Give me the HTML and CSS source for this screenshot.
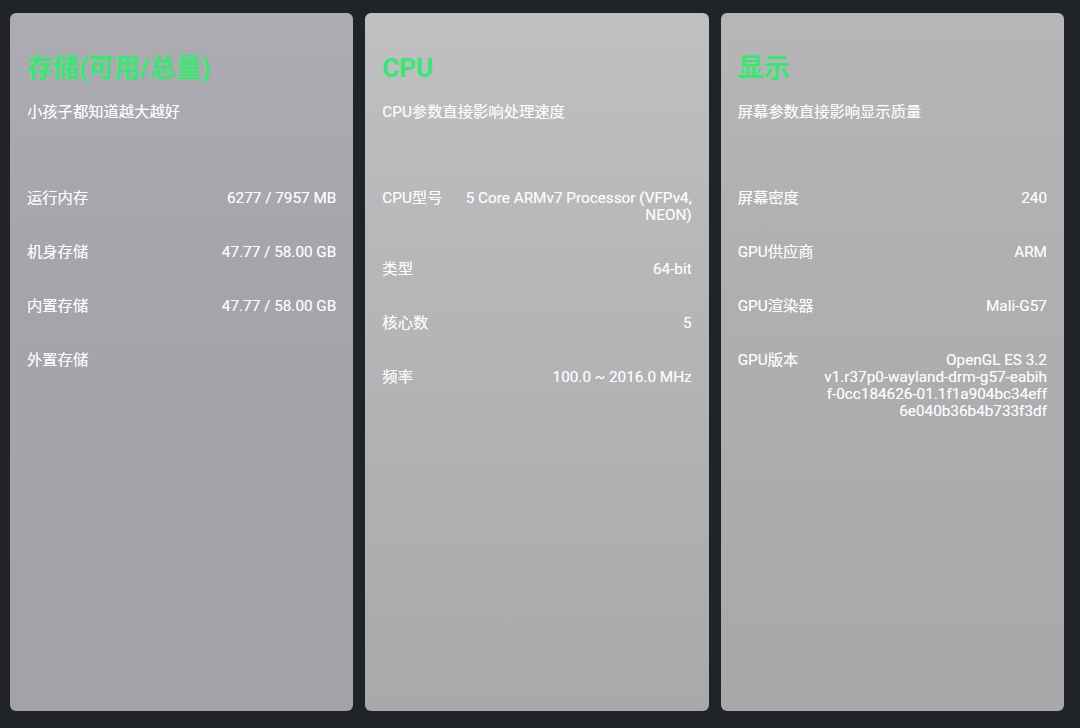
FILE: index.html
```html
<!DOCTYPE html>
<html lang="zh-CN">
<head>
<meta charset="utf-8">
<title>设备信息</title>
<link rel="stylesheet" href="styles.css">
</head>
<body>
<div class="screen">
  <section class="card card-storage">
    <h1 class="title">存储(可用/总量)</h1>
    <p class="subtitle">小孩子都知道越大越好</p>
    <div class="rows">
      <div class="row"><span class="label">运行内存</span><span class="value">6277 / 7957 MB</span></div>
      <div class="row"><span class="label">机身存储</span><span class="value">47.77 / 58.00 GB</span></div>
      <div class="row"><span class="label">内置存储</span><span class="value">47.77 / 58.00 GB</span></div>
      <div class="row"><span class="label">外置存储</span><span class="value"></span></div>
    </div>
  </section>
  <section class="card card-cpu">
    <h1 class="title">CPU</h1>
    <p class="subtitle">CPU参数直接影响处理速度</p>
    <div class="rows">
      <div class="row"><span class="label">CPU型号</span><span class="value">5 Core ARMv7 Processor (VFPv4, NEON)</span></div>
      <div class="row"><span class="label">类型</span><span class="value">64-bit</span></div>
      <div class="row"><span class="label">核心数</span><span class="value">5</span></div>
      <div class="row"><span class="label">频率</span><span class="value">100.0 ~ 2016.0 MHz</span></div>
    </div>
  </section>
  <section class="card card-display">
    <h1 class="title">显示</h1>
    <p class="subtitle">屏幕参数直接影响显示质量</p>
    <div class="rows">
      <div class="row"><span class="label">屏幕密度</span><span class="value">240</span></div>
      <div class="row"><span class="label">GPU供应商</span><span class="value">ARM</span></div>
      <div class="row"><span class="label">GPU渲染器</span><span class="value">Mali-G57</span></div>
      <div class="row"><span class="label">GPU版本</span><span class="value">OpenGL ES 3.2<br>v1.r37p0-wayland-drm-g57-eabih<br>f-0cc184626-01.1f1a904bc34eff<br>6e040b36b4b733f3df</span></div>
    </div>
  </section>
</div>
</body>
</html>
```
FILE: styles.css
```css
html, body {
  margin: 0;
  padding: 0;
}
body {
  width: 1080px;
  height: 728px;
  background: #202327;
  font-family: Roboto, "Noto Sans CJK SC", sans-serif;
  overflow: hidden;
}
.screen {
  box-sizing: border-box;
  height: 728px;
  display: flex;
  gap: 12px;
  padding: 13px 16px 17px 10px;
}
.card {
  flex: 1;
  box-sizing: border-box;
  border-radius: 6px;
  padding: 40px 17px 17px 17px;
  color: #fbfbfc;
  text-shadow: 0 0 0.6px rgba(255, 255, 255, 0.7);
}
.card-storage {
  background: linear-gradient(180deg, #adacb2 0%, #a5a4aa 40%, #a2a2a7 100%);
}
.card-cpu {
  background: linear-gradient(180deg, #c0c0c2 0%, #b6b6b8 40%, #a9a9ac 100%);
}
.card-display {
  background: linear-gradient(180deg, #b6b6b8 0%, #afafb1 40%, #a8a8ab 100%);
}
.title {
  margin: 0;
  font-size: 26px;
  line-height: 30px;
  font-weight: 700;
  color: #42e177;
  text-shadow: 0 0 2px rgba(80, 255, 140, 0.5);
}
.subtitle {
  margin: 21px 0 0 0;
  font-size: 15.3px;
  line-height: 17px;
}
.rows {
  margin-top: 69px;
  display: flex;
  flex-direction: column;
  gap: 37px;
}
.row {
  display: flex;
  justify-content: space-between;
  align-items: flex-start;
  font-size: 15.3px;
  line-height: 17px;
}
.label {
  flex: none;
  white-space: nowrap;
}
.value {
  flex: 1;
  margin-left: 20px;
  text-align: right;
}
```
